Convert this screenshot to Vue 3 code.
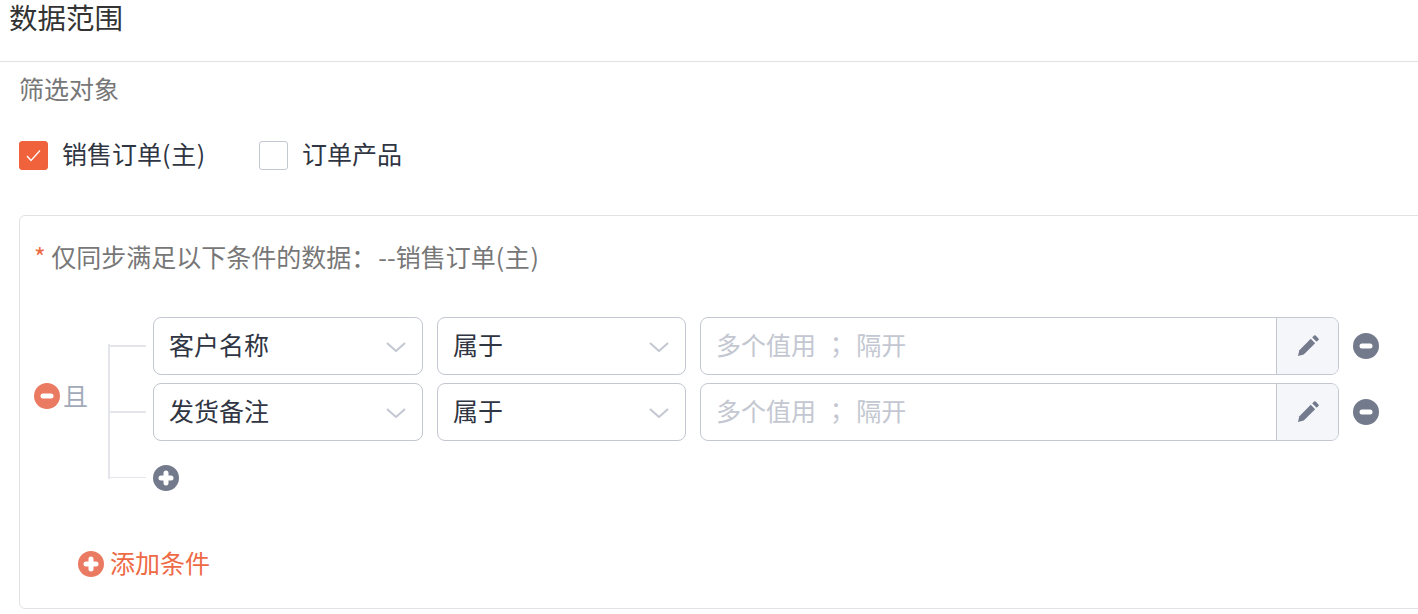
<template>
  <div class="page">
    <div class="title">数据范围</div>
    <div class="body">
      <div class="sub">筛选对象</div>
      <div class="checks">
        <label class="check">
          <span class="box on">
            <svg width="15" height="15" viewBox="0 0 15 15"><path d="M1 8l4 4.500 9-10" fill="none" stroke="#fff" stroke-width="1.300" /></svg>
          </span>
          <span class="txt">销售订单<span class="paren">(主)</span></span>
        </label>
        <label class="check">
          <span class="box"></span>
          <span class="txt">订单产品</span>
        </label>
      </div>
      <div class="panel">
        <div class="hint"><span class="star">*</span> 仅同步满足以下条件的数据：<span class="ref-name">--销售订单<span class="paren">(主)</span></span></div>
        <div class="group">
          <div class="logic">
            <svg class="dot soft" viewBox="0 0 26 26"><circle cx="13" cy="13" r="13" /><rect x="6.500" y="10.500" width="13" height="5" rx="2.500" fill="#fff" /></svg>
            <span class="logic-text">且</span>
          </div>
          <div class="stem"></div>
          <div class="tree">
            <div v-for="(r, i) in rows" :key="i" class="row">
              <div class="branch"></div>
              <div class="select field-name">
                <span class="txt">{{ r }}</span>
                <svg class="chev" width="20" height="10" viewBox="0 0 20 10"><path d="M1 1l9 8 9-8" fill="none" stroke="#c3c7d1" stroke-width="2" /></svg>
              </div>
              <div class="select field-op">
                <span class="txt">属于</span>
                <svg class="chev" width="20" height="10" viewBox="0 0 20 10"><path d="M1 1l9 8 9-8" fill="none" stroke="#c3c7d1" stroke-width="2" /></svg>
              </div>
              <div class="value">
                <div class="placeholder"><span class="txt">多个值用 <span class="semi">；</span> 隔开</span></div>
                <div class="edit">
                  <svg width="22" height="22" viewBox="0 0 24 24" fill="#737a8c">
                    <path d="M1 23l1.600-6.400L15 4.200l4.800 4.800L7.400 21.400z" />
                    <path d="M16.600 2.600l2-2a1.200 1.200 0 0 1 1.700 0l3.100 3.100a1.200 1.200 0 0 1 0 1.700l-2 2z" />
                  </svg>
                </div>
              </div>
              <svg class="dot grey" viewBox="0 0 26 26"><circle cx="13" cy="13" r="13" /><rect x="6.500" y="10.500" width="13" height="5" rx="2.500" fill="#fff" /></svg>
            </div>
            <div class="row add-row">
              <div class="branch"></div>
              <svg class="dot grey" viewBox="0 0 26 26"><circle cx="13" cy="13" r="13" /><path d="M13 8v10M8 13h10" stroke="#fff" stroke-width="5" stroke-linecap="round" /></svg>
            </div>
          </div>
        </div>
        <div class="add">
          <svg class="dot soft" viewBox="0 0 26 26"><circle cx="13" cy="13" r="13" /><path d="M13 8v10M8 13h10" stroke="#fff" stroke-width="5" stroke-linecap="round" /></svg>
          <span class="txt">添加条件</span>
        </div>
      </div>
    </div>
  </div>
</template>

<script setup>
const rows = ["客户名称", "发货备注"];
</script>

<style>
html,
body {
  background: #fff;
  overflow: hidden;
}
</style>

<style scoped>
.page {
  width: 1418px;
  height: 614px;
  overflow: hidden;
  font-family: "Noto Sans CJK SC", "Liberation Sans", sans-serif;
  font-size: 25px;
  color: #2f3542;
}
.title {
  box-sizing: border-box;
  height: 62px;
  padding-left: 9px;
  font-size: 28.5px;
  line-height: 33px;
  color: #333;
  border-bottom: 1px solid #e1e2e6;
}
.body {
  padding-left: 19px;
}
.txt {
  padding-bottom: 4px;
}
.paren {
  letter-spacing: 0.7px;
}
.sub {
  margin-top: 8px;
  line-height: 36px;
  color: #777;
}
.checks {
  display: flex;
  gap: 53px;
  margin-top: 35px;
}
.check {
  display: flex;
  align-items: center;
  gap: 14px;
  height: 29px;
  line-height: 29px;
}
.box {
  display: flex;
  align-items: center;
  justify-content: center;
  box-sizing: border-box;
  width: 29px;
  height: 29px;
  border: 1px solid #c3c7d1;
  border-radius: 3px;
  background: #fff;
}
.box.on {
  background: #f0623c;
  border-color: #f0623c;
}
.panel {
  box-sizing: border-box;
  width: 1420px;
  height: 394px;
  margin-top: 45px;
  padding: 22px 14px 0;
  border: 1px solid #e1e2e6;
  border-radius: 6px;
}
.hint {
  line-height: 36px;
  color: #777;
}
.star {
  color: #ee6a45;
}
.ref-name {
  margin-left: 2px;
}
.group {
  display: flex;
  margin-top: 43px;
}
.logic {
  display: flex;
  align-items: center;
  gap: 3px;
  width: 74px;
  padding-bottom: 16px;
  box-sizing: border-box;
}
.logic-text {
  color: #a2a9b8;
  line-height: 26px;
  padding-bottom: 2px;
}
.dot {
  flex: none;
  width: 26px;
  height: 26px;
}
.dot.soft {
  fill: #ea7b62;
}
.dot.grey {
  fill: #737a8c;
}
.stem {
  width: 1.5px;
  margin: 27px 0 12px;
  background: #e4e5ea;
}
.tree {
  display: flex;
  flex-direction: column;
}
.row {
  display: flex;
  align-items: center;
  height: 57.5px;
  margin-bottom: 8.5px;
}
.add-row {
  height: 26px;
  margin: 15.5px 0 0;
}
.branch {
  width: 36.5px;
  height: 1.5px;
  margin-right: 7px;
  background: #e4e5ea;
}
.select,
.value {
  display: flex;
  align-items: center;
  box-sizing: border-box;
  height: 100%;
  border: 1px solid #c3c7d1;
  border-radius: 8px;
  background: #fff;
}
.select {
  justify-content: space-between;
  padding: 0 16px 0 15px;
  margin-right: 14px;
}
.field-name {
  width: 270px;
}
.field-op {
  width: 249px;
}
.chev {
  margin-top: 3px;
}
.value {
  width: 639px;
  margin-right: 14px;
  overflow: hidden;
}
.placeholder {
  display: flex;
  flex: 1;
  padding-left: 15px;
  color: #c3c7d1;
  word-spacing: 2px;
  white-space: pre;
}
.semi {
  font-family: "Noto Sans CJK TC", sans-serif;
}
.edit {
  display: flex;
  align-items: center;
  justify-content: center;
  box-sizing: border-box;
  width: 62px;
  height: 100%;
  border-left: 1px solid #c3c7d1;
  background: #f5f6fa;
}
.add {
  display: flex;
  align-items: center;
  gap: 6px;
  margin: 53px 0 0 44px;
  color: #ee6a45;
  line-height: 36px;
}
</style>
